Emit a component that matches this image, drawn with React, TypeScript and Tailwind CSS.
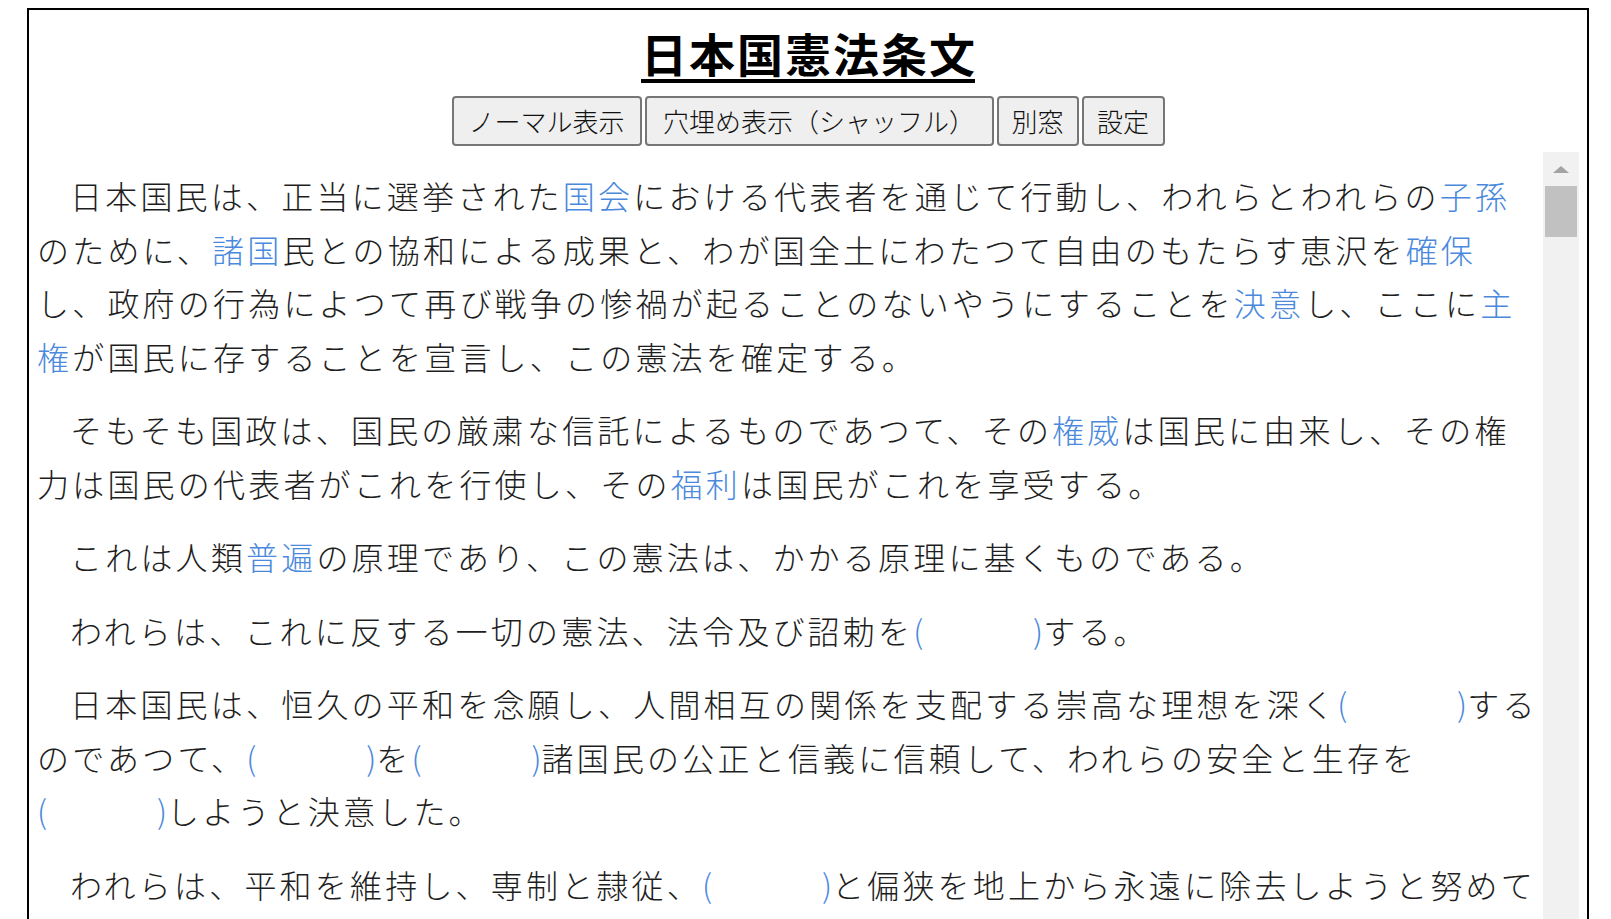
import React from "react";

const B = ({ children }: { children: React.ReactNode }) => (
  <span className="text-[#4a89dc]">{children}</span>
);

const Blank = () => (
  <span className="inline-flex w-[130px] justify-between whitespace-nowrap indent-0 text-[#4a89dc] tracking-normal">
    <span className="indent-0">(</span>
    <span className="indent-0">)</span>
  </span>
);

export default function App() {
  return (
    <div
      lang="ja"
      className="h-[919px] w-[1611px] overflow-hidden bg-white pt-[8px] font-['Noto_Sans_CJK_JP','Noto_Sans',sans-serif] text-[#1e1e1e]"
    >
      <div className="ml-[27px] w-[1562px] h-[1100px] border-2 border-b-0 border-black px-[8px]">
        <h1 className="mt-[14px] text-center text-[46px] leading-[56px] font-bold text-black">
          <span className="underline decoration-[4px] underline-offset-[7px]">
            <span className="tracking-[2px]">日本国憲法条</span>文
          </span>
        </h1>

        <div className="mt-[16px] flex justify-center gap-[3px]">
          {[
            { t: "ノーマル表示", w: "w-[190px]" },
            { t: "穴埋め表示（シャッフル）", w: "w-[349px]" },
            { t: "別窓", w: "w-[82px]" },
            { t: "設定", w: "w-[83px]" },
          ].map((b) => (
            <button
              key={b.t}
              className={`${b.w} h-[50px] flex items-center justify-center whitespace-nowrap rounded-[4px] border-2 border-[#767676] bg-[#efefef] text-[26px] leading-[30px] font-light text-[#111]`}
            >
              {b.t}
            </button>
          ))}
        </div>

        <div className="mt-[6px] flex">
          <div className="w-[1506px] shrink-0 text-[32px] leading-[53.5px] tracking-[3.2px] font-light pt-[17px]">
            <p className="indent-[33px] mb-[20px]">
              日本国民は、正当に選挙された<B>国会</B>における代表者を通じて行動し、われらとわれらの<B>子孫</B>のために、<B>諸国</B>民との協和による成果と、わが国全土にわたつて自由のもたらす恵沢を<B>確保</B>し、政府の行為によつて再び戦争の惨禍が起ることのないやうにすることを<B>決意</B>し、ここに<B>主権</B>が国民に存することを宣言し、この憲法を確定する。
            </p>
            <p className="indent-[33px] mb-[20px]">
              そもそも国政は、国民の厳粛な信託によるものであつて、その<B>権威</B>は国民に由来し、その権力は国民の代表者がこれを行使し、その<B>福利</B>は国民がこれを享受する。
            </p>
            <p className="indent-[33px] mb-[20px]">
              これは人類<B>普遍</B>の原理であり、この憲法は、かかる原理に基くものである。
            </p>
            <p className="indent-[33px] mb-[20px]">
              われらは、これに反する一切の憲法、法令及び詔勅を<Blank />する。
            </p>
            <p className="indent-[33px] mb-[20px]">
              日本国民は、恒久の平和を念願し、人間相互の関係を支配する崇高な理想を深く<Blank />するのであつて、<Blank />を<Blank />諸国民の公正と信義に信頼して、われらの安全と生存を<Blank />しようと決意した。
            </p>
            <p className="indent-[33px] mb-[20px]">
              われらは、平和を維持し、専制と隷従、<Blank />と偏狭を地上から永遠に除去しようと努めてゐる国際社会において、名誉ある地位を占めたいと思ふ。
            </p>
          </div>
          <div className="w-[36px] shrink-0 bg-[#f1f1f1] flex flex-col">
            <div className="h-[34px] flex items-center justify-center pt-[2px]">
              <svg width="16" height="8" viewBox="0 0 16 8">
                <polygon points="8,0 16,7 0,7" fill="#a3a3a3" />
              </svg>
            </div>
            <div className="mx-[2px] h-[51px] bg-[#c1c1c1]" />
          </div>
        </div>
      </div>
    </div>
  );
}
